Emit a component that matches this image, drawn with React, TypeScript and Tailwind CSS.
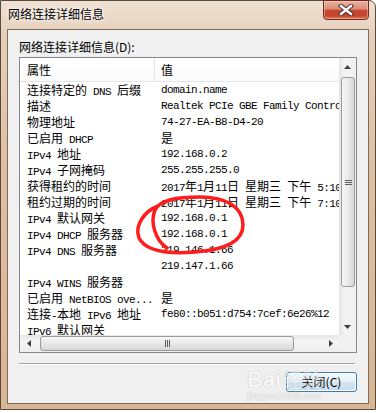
import React from 'react';

const CJK = /([\u2E80-\u9FFF\uF900-\uFAFF\uFF00-\uFFEF\u3000-\u303F]+)/;

// SimSun-ish mix: CJK 12px wide, latin half-width 6px
function Mixed({ text }: { text: string }) {
  const parts = text.split(CJK);
  return (
    <>
      {parts.map((p, i) =>
        p === '' ? null : i % 2 === 1 ? (
          <span key={i} className="font-['Noto_Sans_CJK_SC',sans-serif] text-[12px] leading-[16px]">
            {p}
          </span>
        ) : (
          <span key={i} className="font-['Liberation_Mono',monospace] text-[11px] leading-[16px] tracking-[-0.6px]">
            {p}
          </span>
        ),
      )}
    </>
  );
}

const ROWS: [string, string][] = [
  ['连接特定的 DNS 后缀', 'domain.name'],
  ['描述', 'Realtek PCIe GBE Family Controller'],
  ['物理地址', '74-27-EA-B8-D4-20'],
  ['已启用 DHCP', '是'],
  ['IPv4 地址', '192.168.0.2'],
  ['IPv4 子网掩码', '255.255.255.0'],
  ['获得租约的时间', '2017年1月11日 星期三 下午 5:10:23'],
  ['租约过期的时间', '2017年1月11日 星期三 下午 7:10:23'],
  ['IPv4 默认网关', '192.168.0.1'],
  ['IPv4 DHCP 服务器', '192.168.0.1'],
  ['IPv4 DNS 服务器', '219.146.1.66'],
  ['', '219.147.1.66'],
  ['IPv4 WINS 服务器', ''],
  ['已启用 NetBIOS ove...', '是'],
  ['连接-本地 IPv6 地址', 'fe80::b051:d754:7cef:6e26%12'],
  ['IPv6 默认网关', ''],
  ['', ''],
];

function Tri({ dir }: { dir: 'up' | 'down' | 'left' | 'right' }) {
  const pts = {
    up: '0,4 7,4 3.5,0',
    down: '0,0 7,0 3.5,4',
    left: '4,0 4,7 0,3.5',
    right: '0,0 0,7 4,3.5',
  }[dir];
  const vertical = dir === 'up' || dir === 'down';
  return (
    <svg width={vertical ? 7 : 4} height={vertical ? 4 : 7} viewBox={vertical ? '0 0 7 4' : '0 0 4 7'}>
      <polygon points={pts} fill="#404040" />
    </svg>
  );
}

function CloseButton() {
  return (
    <div className="-mt-px w-[46px] h-[20px] rounded-b-[4px] border border-[#6e2a1d] bg-[linear-gradient(to_bottom,#e9b2a4_0%,#dc8b76_45%,#c8472e_52%,#c44429_78%,#da7356_100%)] shadow-[inset_0_0_0_1px_rgba(255,220,210,0.45)] flex items-center justify-center">
      <svg width="16" height="12" viewBox="0 0 16 12">
        <path d="M3 2 L13 10 M13 2 L3 10" stroke="#3a2b28" strokeWidth="4.2" strokeLinecap="square" />
        <path d="M3 2 L13 10 M13 2 L3 10" stroke="#ffffff" strokeWidth="2.4" strokeLinecap="square" />
      </svg>
    </div>
  );
}

export default function App() {
  return (
    <div className="relative w-[376px] h-[413px] bg-white overflow-hidden">
      <div className="flex flex-col w-[376px] h-[410px] rounded-tr-[7px] border border-[#5a4a3d] bg-[linear-gradient(to_bottom,#efe1d3_0%,#e6d0bb_8%,#dec0a2_40%,#d9b694_100%)]">
        {/* title bar */}
        <div className="h-[28px] flex items-start justify-between pl-[7px] pr-[6px]">
          <span className="mt-[5px] text-[12px] leading-[16px] text-black font-['Noto_Sans_CJK_SC',sans-serif] [text-shadow:0_0_6px_#fff,0_0_3px_#fff]">
            网络连接详细信息
          </span>
          <CloseButton />
        </div>

        {/* client area */}
        <div className="mx-[6px] h-[375px] border border-[#7c6b5b] bg-[#f0f0f0] flex flex-col px-[11px] pt-[9px]">
          <div className="h-[16px] leading-[16px] text-[12px] text-black font-['Noto_Sans_CJK_SC',sans-serif]">
            网络连接详细信息(D):
          </div>

          <div className="mt-[2px] h-[296px] border border-[#828790] bg-white grid grid-cols-[1fr_17px] grid-rows-[1fr_17px]">
            {/* content */}
            <div className="overflow-hidden">
              <div className="h-[24px] flex border-b border-[#e5e5e5] bg-[linear-gradient(to_bottom,#ffffff,#fbfbfb)] text-[12px] text-black font-['Noto_Sans_CJK_SC',sans-serif]">
                <div className="w-[135px] shrink-0 pl-[7px] flex items-center border-r border-[#e5e5e5]">属性</div>
                <div className="pl-[6px] flex items-center">值</div>
              </div>
              {ROWS.map(([k, v], i) => (
                <div key={i} className="h-[16px] flex items-center whitespace-pre text-black">
                  <div className="w-[135px] shrink-0 pl-[7px] h-[16px] flex items-baseline whitespace-pre">
                    <Mixed text={k} />
                  </div>
                  <div className="pl-[6px] h-[16px] flex items-baseline whitespace-pre">
                    <Mixed text={v} />
                  </div>
                </div>
              ))}
            </div>

            {/* vertical scrollbar */}
            <div className="flex flex-col bg-[linear-gradient(to_right,#e4e4e4,#f4f4f4_35%,#efefef)]">
              <div className="h-[17px] flex items-center justify-center">
                <Tri dir="up" />
              </div>
              <div className="flex-1 pt-[2px]">
                <div className="ml-[2px] w-[14px] h-[210px] rounded-[3px] border border-[#9a9a9a] bg-[linear-gradient(to_right,#f7f7f7,#e9e9e9_50%,#d6d6d6)] flex flex-col items-center justify-center gap-[1px]">
                  <div className="w-[7px] h-px bg-[#5c5c5c]" />
                  <div className="w-[7px] h-px bg-[#5c5c5c]" />
                  <div className="w-[7px] h-px bg-[#5c5c5c]" />
                </div>
              </div>
              <div className="h-[17px] flex items-center justify-center">
                <Tri dir="down" />
              </div>
            </div>

            {/* horizontal scrollbar */}
            <div className="flex bg-[linear-gradient(to_bottom,#e4e4e4,#f4f4f4_35%,#efefef)]">
              <div className="w-[17px] flex items-center justify-center">
                <Tri dir="left" />
              </div>
              <div className="flex-1 pl-[3px] flex items-center">
                <div className="w-[254px] h-[15px] rounded-[3px] border border-[#9a9a9a] bg-[linear-gradient(to_bottom,#f7f7f7,#e9e9e9_50%,#d6d6d6)] flex items-center justify-center gap-[1px]">
                  <div className="w-px h-[7px] bg-[#5c5c5c]" />
                  <div className="w-px h-[7px] bg-[#5c5c5c]" />
                  <div className="w-px h-[7px] bg-[#5c5c5c]" />
                </div>
              </div>
              <div className="w-[17px] flex items-center justify-center">
                <Tri dir="right" />
              </div>
            </div>
            <div className="bg-[#f0f0f0]" />
          </div>

          {/* separator */}
          <div className="mt-[10px] mr-[2px] h-px bg-[#a0a0a0]" />
          <div className="mr-[2px] h-px bg-white" />

          <div className="mt-[7px] flex justify-end">
            <button className="w-[71px] h-[20px] rounded-[3px] border border-[#3c7fb1] bg-[linear-gradient(to_bottom,#f4f9fc_0%,#e6f1f8_48%,#d3e6f2_52%,#c9def0_100%)] shadow-[inset_0_0_0_1px_#ffffff] text-[12px] leading-[16px] text-black font-['Noto_Sans_CJK_SC',sans-serif]">
              关闭(C)
            </button>
          </div>
        </div>
      </div>

      {/* baidu watermark */}
      <div className="absolute left-[247px] top-[368px] flex flex-col items-start opacity-50 pointer-events-none">
        <div className="flex items-end">
          <span className="text-[22px] leading-[24px] font-bold text-white font-['Liberation_Sans',sans-serif] [text-shadow:0_0_1px_#9a9a9a,0_0_1px_#9a9a9a]">
            Bai
          </span>
          <span className="ml-[1px] text-[20px] leading-[24px] text-white font-['Noto_Sans_CJK_SC',sans-serif] [text-shadow:0_0_1px_#9a9a9a,0_0_1px_#9a9a9a]">
            经验
          </span>
        </div>
        <span className="-mt-[2px] text-[10px] leading-[12px] text-white font-['Liberation_Serif',serif] [text-shadow:0_0_1px_#9a9a9a,0_0_1px_#9a9a9a]">
          jingyan.baidu.com
        </span>
      </div>

      {/* red hand-drawn circle */}
      <svg className="absolute left-0 top-0 pointer-events-none" width="376" height="413">
        <path
          d="M167 248 C 155 240 150 222 155 210 C 160 200 176 197 200 197 C 226 197 243 207 243 225 C 243 243 222 250 195 252 C 170 254 146 252 139 238 C 134 225 145 211 158 206"
          fill="none"
          stroke="#ff1c1c"
          strokeWidth="3.5"
          strokeLinecap="round"
        />
      </svg>
    </div>
  );
}
